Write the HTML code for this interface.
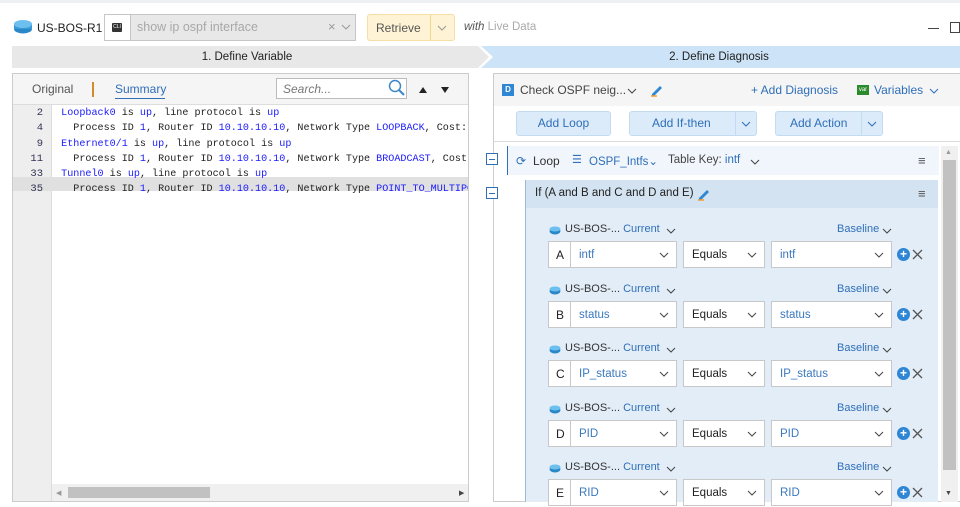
<!DOCTYPE html>
<html><head><style>
*{box-sizing:border-box;margin:0;padding:0}
body{width:960px;height:502px;overflow:hidden;background:#fff;font-family:"Liberation Sans",sans-serif;font-size:12px;color:#333;position:relative}
.a{position:absolute}
.code{font-family:"Liberation Mono",monospace;font-size:10.1px;white-space:pre;color:#222}
.b{color:#1a1aff}
.ln{width:30px;text-align:right;color:#335;font-size:10.5px}
.sel{border:1px solid #c8c8c8;background:#fff;height:27px;font-size:11.5px;color:#3a78c0;padding-left:8px;line-height:27px}
.sel svg{position:absolute;right:7px;top:10px}
.blue{color:#2f6fb8}
</style></head><body>
<div class="a" style="left:0;top:0;width:960px;height:3px;background:#eef0f3"></div>
<svg class="a" style="left:13px;top:20px" width="20" height="14"><ellipse cx="10" cy="9" rx="9" ry="4.5" fill="#2a88c8"/><rect x="1" y="4" width="18" height="5" fill="#3a9ad8"/><ellipse cx="10" cy="4" rx="9" ry="4" fill="#6cc0ef"/></svg>
<div class="a" style="left:37px;top:21px;font-size:12px;color:#222">US-BOS-R1</div>
<div class="a" style="left:104px;top:14px;width:252px;height:27px;border:1px solid #c6c6c6;background:#e8e8e8"></div>
<div class="a" style="left:105px;top:15px;width:26px;height:25px;background:#fff;border-right:1px solid #c6c6c6"></div>
<div class="a" style="left:112px;top:23px;width:10px;height:9px;background:#333;border-radius:1px;color:#fff;font-size:5px;text-align:center;line-height:9px">CLI</div>
<div class="a" style="left:137px;top:20px;font-size:12.5px;color:#a8a8a8">show ip ospf interface</div>
<div class="a" style="left:328px;top:19px;font-size:13px;color:#999">×</div>
<svg class="a" style="left:341px;top:24px" width="10" height="6"><path d="M1 1l4 4 4-4" stroke="#999" fill="none"/></svg>
<div class="a" style="left:367px;top:14px;width:88px;height:27px;border:1px solid #f5dfa5;background:#fff3d6;border-radius:3px"></div>
<div class="a" style="left:430px;top:15px;width:1px;height:25px;background:#f0d490"></div>
<div class="a" style="left:376px;top:21px;font-size:12px;color:#555">Retrieve</div>
<svg class="a" style="left:437px;top:25px" width="10" height="6"><path d="M1 1l4 4 4-4" stroke="#999" fill="none"/></svg>
<div class="a" style="left:464px;top:21px;font-size:11.5px;color:#aaa"><i style="color:#555">with</i> Live Data</div>
<div class="a" style="left:928px;top:28px;width:11px;height:1px;background:#444"></div>
<div class="a" style="left:950px;top:22px;width:10px;height:11px;border:1px solid #444"></div>
<div class="a" style="left:12px;top:46px;width:470px;height:22px;background:#e8e8e8;text-align:center;line-height:22px;font-size:11.5px;color:#222">1. Define Variable</div>
<div class="a" style="left:478px;top:46px;width:482px;height:22px;background:#cde3f7;text-align:center;line-height:22px;font-size:11.5px;color:#222">2. Define Diagnosis</div>
<svg class="a" style="left:465px;top:46px" width="30" height="22"><path d="M0 0H16L28 11L16 22H0Z" fill="#fff"/><path d="M0 0H13L24 11L13 22H0Z" fill="#e8e8e8"/></svg>
<!-- left panel -->
<div class="a" style="left:12px;top:73px;width:457px;height:429px;border:1px solid #ccc"></div>
<div class="a" style="left:13px;top:74px;width:455px;height:31px;background:#f5f5f5;border-bottom:1px solid #ddd"></div>
<div class="a" style="left:32px;top:82px;font-size:12px;color:#555">Original</div>
<div class="a" style="left:92px;top:82px;width:2px;height:15px;background:#d4892c"></div>
<div class="a" style="left:115px;top:82px;font-size:12px;color:#2f6fb8">Summary</div>
<div class="a" style="left:115px;top:98px;width:50px;height:1px;background:#2f6fb8"></div>
<div class="a" style="left:276px;top:78px;width:131px;height:21px;border:1px solid #bbb;background:#fff"></div>
<div class="a" style="left:283px;top:82px;font-size:12px;color:#777;font-style:italic">Search...</div>
<svg class="a" style="left:388px;top:79px" width="18" height="18"><circle cx="7" cy="7" r="5.5" stroke="#3a88c8" stroke-width="1.5" fill="none"/><path d="M11 11l5 5" stroke="#3a88c8" stroke-width="2"/></svg>
<svg class="a" style="left:418px;top:86px" width="40" height="8"><path d="M1 7l4-6 4 6Z" fill="#222"/><path d="M23 1h8l-4 6Z" fill="#222"/></svg>
<div class="a" style="left:13px;top:105px;width:39px;height:396px;background:#eee;border-right:1px solid #ddd"></div>
<div class="a" style="left:13px;top:177px;width:455px;height:14px;background:#e0e0e0"></div>
<div class="a" style="left:13px;top:106px;width:455px;height:100px;overflow:hidden">
<div class="code" style="line-height:14.3px"><span class="ln" style="display:inline-block">2</span>   <span class="b">Loopback0</span> is <span class="b">up</span>, line protocol is <span class="b">up</span>
<span class="ln" style="display:inline-block">4</span>     Process ID <span class="b">1</span>, Router ID <span class="b">10.10.10.10</span>, Network Type <span class="b">LOOPBACK</span>, Cost: <span class="b">1</span>
<span class="ln" style="display:inline-block">9</span>   <span class="b">Ethernet0/1</span> is <span class="b">up</span>, line protocol is <span class="b">up</span>
<span class="ln" style="display:inline-block">11</span>     Process ID <span class="b">1</span>, Router ID <span class="b">10.10.10.10</span>, Network Type <span class="b">BROADCAST</span>, Cost: 1
<span class="ln" style="display:inline-block">33</span>   <span class="b">Tunnel0</span> is <span class="b">up</span>, line protocol is <span class="b">up</span>
<span class="ln" style="display:inline-block">35</span>     Process ID <span class="b">1</span>, Router ID <span class="b">10.10.10.10</span>, Network Type <span class="b">POINT_TO_MULTIPOINT</span></div></div>
<div class="a" style="left:52px;top:484px;width:416px;height:17px;background:#f0f0f0"></div>
<div class="a" style="left:68px;top:487px;width:142px;height:11px;background:#c1c1c1"></div>
<div class="a" style="left:56px;top:489px;font-size:7px;color:#999">◀</div>
<div class="a" style="left:459px;top:489px;font-size:7px;color:#444">▶</div>
<!-- right panel -->
<div class="a" style="left:493px;top:73px;width:467px;height:429px;border:1px solid #ccc;border-right:none"></div>
<div class="a" style="left:494px;top:74px;width:466px;height:32px;background:#f5f5f5"></div>
<div class="a" style="left:502px;top:84px;width:12px;height:12px;background:#2f86d4;color:#fff;font-size:8px;font-weight:bold;text-align:center;line-height:12px">D</div>
<div class="a" style="left:520px;top:83px;font-size:12px;color:#444">Check OSPF neig...</div>
<svg class="a" style="left:627px;top:88px" width="10" height="6"><path d="M1 1l4 4 4-4" stroke="#444" fill="none"/></svg>
<svg class="a" style="left:650px;top:84px" width="14" height="13"><path d="M2 10L10 2l2 2-8 8H2Z" fill="#2f86d4"/><path d="M1 12h6" stroke="#f0a030" stroke-width="1.5"/></svg>
<div class="a" style="left:751px;top:83px;font-size:12px;color:#2f6fb8">+ Add Diagnosis</div>
<div class="a" style="left:857px;top:85px;width:12px;height:10px;background:#2b8a2b;color:#fff;font-size:6px;text-align:center;line-height:10px">var</div>
<div class="a" style="left:874px;top:83px;font-size:12px;color:#2f6fb8">Variables</div>
<svg class="a" style="left:929px;top:88px" width="10" height="6"><path d="M1 1l4 4 4-4" stroke="#2f6fb8" fill="none"/></svg>
<div class="a" style="left:516px;top:111px;width:95px;height:25px;background:#dcebfa;border:1px solid #c3dbf1;border-radius:3px;text-align:center;line-height:23px;color:#2f6fb8;font-size:12px">Add Loop</div>
<div class="a" style="left:629px;top:111px;width:128px;height:25px;background:#dcebfa;border:1px solid #c3dbf1;border-radius:3px;color:#2f6fb8;font-size:12px;line-height:23px;padding-left:22px">Add If-then</div>
<div class="a" style="left:735px;top:112px;width:1px;height:23px;background:#c3dbf1"></div>
<svg class="a" style="left:741px;top:121px" width="10" height="6"><path d="M1 1l4 4 4-4" stroke="#2f6fb8" fill="none"/></svg>
<div class="a" style="left:775px;top:111px;width:108px;height:25px;background:#dcebfa;border:1px solid #c3dbf1;border-radius:3px;color:#2f6fb8;font-size:12px;line-height:23px;padding-left:14px">Add Action</div>
<div class="a" style="left:861px;top:112px;width:1px;height:23px;background:#c3dbf1"></div>
<svg class="a" style="left:867px;top:121px" width="10" height="6"><path d="M1 1l4 4 4-4" stroke="#2f6fb8" fill="none"/></svg>
<div class="a" style="left:494px;top:141px;width:466px;height:1px;background:#ddd"></div>
<div class="a" style="left:507px;top:146px;width:432px;height:29px;background:#f0f6fc;border-left:1px solid #2f6fb8"></div>
<div class="a" style="left:486px;top:153px;width:12px;height:12px;border:1px solid #2f6fb8;background:#fff"><div style="margin:4.5px 2px;height:1px;background:#2f6fb8"></div></div>
<div class="a" style="left:486px;top:187px;width:12px;height:12px;border:1px solid #2f6fb8;background:#fff"><div style="margin:4.5px 2px;height:1px;background:#2f6fb8"></div></div>
<div class="a" style="left:516px;top:154px;font-size:12px;color:#2f6fb8">⟳</div>
<div class="a" style="left:533px;top:154px;font-size:12px;color:#333">Loop</div>
<div class="a" style="left:572px;top:153px;font-size:11px;color:#2f6fb8">☰</div>
<div class="a" style="left:589px;top:154px;font-size:11.5px;color:#2f6fb8">OSPF_Intfs⌄</div>
<div class="a" style="left:668px;top:154px;font-size:11.5px;color:#444">Table Key: <span class="blue">intf</span></div>
<svg class="a" style="left:750px;top:159px" width="10" height="6"><path d="M1 1l4 4 4-4" stroke="#444" fill="none"/></svg>
<div class="a" style="left:918px;top:153px;font-size:13px;color:#555">≡</div>
<div class="a" style="left:525px;top:180px;width:413px;height:322px;background:#e3edf7;border-left:1px solid #9fb9d3"></div>
<div class="a" style="left:526px;top:180px;width:412px;height:28px;background:#d3e3f1"></div>
<div class="a" style="left:535px;top:187px;font-size:11.5px;color:#222">If (A and B and C and D and E)</div>
<svg class="a" style="left:697px;top:188px" width="14" height="13"><path d="M2 10L10 2l2 2-8 8H2Z" fill="#2f86d4"/><path d="M1 12h6" stroke="#f0a030" stroke-width="1.5"/></svg>
<div class="a" style="left:918px;top:186px;font-size:13px;color:#555">≡</div>
<div class="a" style="left:941px;top:146px;width:17px;height:356px;background:#f0f0f0"></div>
<div class="a" style="left:943px;top:160px;width:13px;height:310px;background:#c1c1c1"></div>
<div class="a" style="left:945px;top:149px;font-size:7px;color:#999">▲</div>
<div class="a" style="left:945px;top:490px;font-size:7px;color:#444">▼</div>
<div id="rows"></div>
<script>
var d=[["A","intf","intf"],["B","status","status"],["C","IP_status","IP_status"],["D","PID","PID"],["E","RID","RID"]];
var h="",chev='<svg width="10" height="6"><path d="M1 1l4 4 4-4" stroke="#444" fill="none"/></svg>';
d.forEach(function(r,i){var y=223+i*59.5,ry=y+18;
h+='<svg class="a" style="left:549px;top:'+(y+3)+'px" width="12" height="9"><ellipse cx="6" cy="5" rx="5.5" ry="3.5" fill="#2a88c8"/><ellipse cx="6" cy="3" rx="5.5" ry="2.5" fill="#6cc0ef"/></svg>';
h+='<div class="a" style="left:565px;top:'+y+'px;font-size:11px;color:#333">US-BOS-... <span class="blue">Current</span></div>';
h+='<svg class="a" style="left:666px;top:'+(y+5)+'px" width="10" height="6"><path d="M1 1l4 4 4-4" stroke="#444" fill="none"/></svg>';
h+='<div class="a" style="left:837px;top:'+y+'px;font-size:11px;color:#2f6fb8">Baseline</div>';
h+='<svg class="a" style="left:882px;top:'+(y+5)+'px" width="10" height="6"><path d="M1 1l4 4 4-4" stroke="#444" fill="none"/></svg>';
h+='<div class="a sel" style="left:548px;top:'+ry+'px;width:23px;color:#222;padding-left:7px;font-size:12px">'+r[0]+'</div>';
h+='<div class="a sel" style="left:570px;top:'+ry+'px;width:107px">'+r[1]+chev+'</div>';
h+='<div class="a sel" style="left:683px;top:'+ry+'px;width:82px;color:#222">Equals'+chev+'</div>';
h+='<div class="a sel" style="left:771px;top:'+ry+'px;width:121px">'+r[2]+chev+'</div>';
h+='<div class="a" style="left:897px;top:'+(ry+7)+'px;width:13px;height:13px;border-radius:50%;background:#2f86d4;color:#fff;font-size:12px;font-weight:bold;text-align:center;line-height:13px">+</div>';
h+='<svg class="a" style="left:912px;top:'+(ry+8)+'px" width="11" height="11"><path d="M1 1l9 9M10 1l-9 9" stroke="#555" stroke-width="1.3"/></svg>';
});
document.getElementById("rows").innerHTML=h;
</script>
</body></html>
